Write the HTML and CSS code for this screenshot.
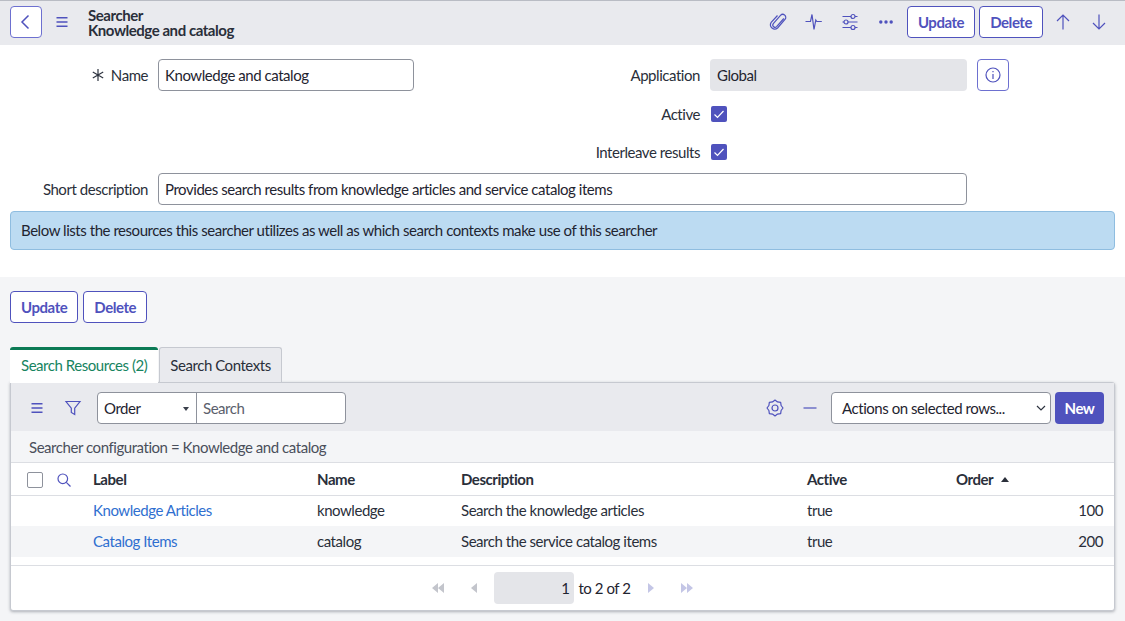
FILE: index.html
```html
<!DOCTYPE html>
<html lang="en">
<head>
    <meta charset="UTF-8">
    <meta name="viewport" content="width=device-width, initial-scale=1.0">
    <title>Searcher - Knowledge and catalog</title>
    <link rel="stylesheet" href="styles.css">
</head>
<body>
    <header class="topbar">
        <button class="btn iconBtn backBtn" aria-label="Back">
            <svg width="20" height="20" viewBox="0 0 20 20"><path d="M12.5 3.5 6 10l6.500 6.500" class="stroke"/></svg>
        </button>
        <svg class="menuIcon" width="20" height="20" viewBox="0 0 20 20"><path d="M4.500 5.800h11M4.500 10h11M4.500 14.200h11" class="stroke"/></svg>
        <div class="recordTitle">
            <div>Searcher</div>
            <div>Knowledge and catalog</div>
        </div>
        <div class="topActions">
            <svg class="topIcon" width="20" height="20" viewBox="0 0 20 20"><path d="M15.800 6.500 8.600 14.600a2.200 2.200 0 0 1-3.300-2.900l7.200-8.300a3 3 0 0 1 4.500 4l-7.400 8.600a4.300 4.300 0 0 1-6.400-5.600L9.500 3.500" class="stroke thin"/></svg>
            <svg class="topIcon" width="20" height="20" viewBox="0 0 20 20"><path d="M1.500 9.500h5l1.500-7 2 15 1.800-9.500 1 1.500h5" class="stroke thin"/></svg>
            <svg class="topIcon" width="20" height="20" viewBox="0 0 20 20"><path d="M2.500 4.500h8.500m4 0h2.500M2.500 10H4m4 0h9.500M2.500 15.500h8.500m4 0h2.500" class="stroke thin"/><circle cx="13" cy="4.500" r="2" class="stroke thin"/><circle cx="6" cy="10" r="2" class="stroke thin"/><circle cx="13" cy="15.500" r="2" class="stroke thin"/></svg>
            <svg class="topIcon lastTopIcon" width="20" height="20" viewBox="0 0 20 20"><circle cx="4.800" cy="10" r="1.700" class="fill"/><circle cx="10" cy="10" r="1.700" class="fill"/><circle cx="15.200" cy="10" r="1.700" class="fill"/></svg>
            <button class="btn">Update</button>
            <button class="btn">Delete</button>
            <svg class="arrowIcon arrowFirst" width="20" height="20" viewBox="0 0 20 20"><path d="M10 17.500V3M4 9l6-6 6 6" class="stroke thin"/></svg>
            <svg class="arrowIcon" width="20" height="20" viewBox="0 0 20 20"><path d="M10 2.500V17M4 11l6 6 6-6" class="stroke thin"/></svg>
        </div>
    </header>

    <section class="formArea">
        <div class="formRow rowName">
            <label class="label labelLeft"><svg class="required" width="14" height="14" viewBox="0 0 14 14"><path d="M7 1v12M1.800 4 12.200 10M12.200 4 1.800 10" class="darkStroke"/></svg>Name</label>
            <input class="field fieldName" type="text" value="Knowledge and catalog">
            <label class="label labelRight">Application</label>
            <div class="field readonly">Global</div>
            <button class="btn iconBtn infoBtn" aria-label="Info">
                <svg width="18" height="18" viewBox="0 0 18 18"><circle cx="9" cy="9" r="7" class="stroke thin"/><path d="M9 8v5M9 5v1.300" class="stroke thin"/></svg>
            </button>
        </div>
        <div class="formRow rowCheck rowActive">
            <label class="label labelFull">Active</label>
            <span class="check"><svg width="16" height="16" viewBox="0 0 16 16"><path d="m3.500 8.500 3 3 6-6.500" class="checkMark"/></svg></span>
        </div>
        <div class="formRow rowCheck rowInterleave">
            <label class="label labelFull">Interleave results</label>
            <span class="check"><svg width="16" height="16" viewBox="0 0 16 16"><path d="m3.500 8.500 3 3 6-6.500" class="checkMark"/></svg></span>
        </div>
        <div class="formRow rowShort">
            <label class="label labelLeft">Short description</label>
            <input class="field fieldShort" type="text" value="Provides search results from knowledge articles and service catalog items">
        </div>
        <div class="notice">Below lists the resources this searcher utilizes as well as which search contexts make use of this searcher</div>
    </section>

    <section class="lowerArea">
        <div class="lowerButtons">
            <button class="btn">Update</button>
            <button class="btn">Delete</button>
        </div>

        <div class="tabs">
            <div class="tab tabActive">Search Resources (2)</div>
            <div class="tab">Search Contexts</div>
        </div>

        <div class="panel">
            <div class="listBar">
                <svg class="listMenu" width="20" height="20" viewBox="0 0 20 20"><path d="M4.500 5.800h11M4.500 10h11M4.500 14.200h11" class="stroke"/></svg>
                <svg class="listFilter" width="20" height="20" viewBox="0 0 20 20"><path d="M3 3.500h14l-5.300 6.700v6.300l-3.400-2v-4.300z" class="stroke thin"/></svg>
                <div class="searchGroup">
                    <div class="orderSelect">Order<span class="smallCaret"></span></div>
                    <div class="searchInput">Search</div>
                </div>
                <svg class="gearIcon" width="20" height="20" viewBox="0 0 20 20"><path d="M18 10 16.100 12.500 15.660 15.660 12.500 16.100 10 18 7.500 16.100 4.340 15.660 3.900 12.500 2 10 3.900 7.500 4.340 4.340 7.500 3.900 10 2 12.500 3.900 15.660 4.340 16.100 7.500z" class="stroke thin gearLine"/><circle cx="10" cy="10" r="3" class="stroke thin"/></svg>
                <svg class="dashIcon" width="20" height="20" viewBox="0 0 20 20"><path d="M3.500 10h13" class="stroke thin"/></svg>
                <div class="actionsSelect">Actions on selected rows...
                    <svg class="chevron" width="12" height="12" viewBox="0 0 12 12"><path d="m2 4 4 4 4-4" class="darkStroke"/></svg>
                </div>
                <button class="newBtn">New</button>
            </div>

            <div class="breadcrumb">Searcher configuration = Knowledge and catalog</div>

            <table class="listTable">
                <colgroup>
                    <col class="colTools">
                    <col class="colLabel">
                    <col class="colName">
                    <col class="colDesc">
                    <col class="colActive">
                    <col class="colOrder">
                </colgroup>
                <thead>
                    <tr>
                        <th class="toolsCell">
                            <span class="rowCheckbox"></span>
                            <svg class="headSearch" width="16" height="16" viewBox="0 0 16 16"><circle cx="6.800" cy="6.800" r="4.800" class="stroke thin"/><path d="m10.300 10.300 4.200 4.200" class="stroke thin"/></svg>
                        </th>
                        <th>Label</th>
                        <th>Name</th>
                        <th>Description</th>
                        <th>Active</th>
                        <th>Order <span class="sortUp"></span></th>
                    </tr>
                </thead>
                <tbody>
                    <tr>
                        <td></td>
                        <td><a href="#">Knowledge Articles</a></td>
                        <td>knowledge</td>
                        <td>Search the knowledge articles</td>
                        <td>true</td>
                        <td class="num">100</td>
                    </tr>
                    <tr class="oddRow">
                        <td></td>
                        <td><a href="#">Catalog Items</a></td>
                        <td>catalog</td>
                        <td>Search the service catalog items</td>
                        <td>true</td>
                        <td class="num">200</td>
                    </tr>
                </tbody>
            </table>

            <div class="pager">
                <svg class="pagerIcon first" width="14" height="12" viewBox="0 0 14 12"><path d="M7 1v10L1 6zM13 1v10L7 6z"/></svg>
                <svg class="pagerIcon prev" width="8" height="12" viewBox="0 0 8 12"><path d="M7 1v10L1 6z"/></svg>
                <div class="pageBox">1</div>
                <span class="pageText">to 2 of 2</span>
                <svg class="pagerIcon next" width="8" height="12" viewBox="0 0 8 12"><path d="M1 1v10l6-5z"/></svg>
                <svg class="pagerIcon last" width="14" height="12" viewBox="0 0 14 12"><path d="M1 1v10l6-5zM7 1v10l6-5z"/></svg>
            </div>
        </div>
    </section>
</body>
</html>
```

FILE: styles.css
```css
* {
    box-sizing: border-box;
}

html, body {
    height: 621px;
    overflow: hidden;
}

body {
    margin: 0;
    font-family: Lato, "Liberation Sans", sans-serif;
    font-size: 15px;
    letter-spacing: -0.45px;
    color: #1f2430;
    background-color: #f4f5f7;
}

.stroke {
    fill: none;
    stroke: #4f52bd;
    stroke-width: 1.500;
}

.thin {
    stroke-width: 1.200;
}

.gearLine {
    stroke-linejoin: round;
}

.fill {
    fill: #4f52bd;
}

.darkStroke {
    fill: none;
    stroke: #2e3440;
    stroke-width: 1.200;
}

.btn {
    height: 32px;
    padding: 0 10px;
    font-family: inherit;
    font-size: 15px;
    font-weight: 700;
    letter-spacing: inherit;
    color: #4f52bd;
    background-color: white;
    border: 1px solid #4f52bd;
    border-radius: 4px;
}

.iconBtn {
    width: 32px;
    padding: 0;
    display: flex;
    align-items: center;
    justify-content: center;
    border-color: #6d70d0;
}

/* top bar */
.topbar {
    height: 45px;
    display: flex;
    align-items: center;
    padding-left: 10px;
    padding-bottom: 2px;
    background-color: #e9eaee;
    border-top: 1px solid #b9bcc4;
}

.menuIcon {
    margin-left: 10px;
}

.recordTitle {
    margin-left: 16px;
    margin-top: 2px;
    font-size: 15px;
    font-weight: 700;
    line-height: 15px;
    color: #2a2f3a;
}

.topActions {
    margin-left: auto;
    display: flex;
    align-items: center;
}

.topIcon {
    margin-right: 16px;
}

.lastTopIcon {
    margin-right: 11px;
}

.topActions .btn + .btn {
    margin-left: 4px;
}

.arrowIcon {
    margin-left: 16px;
    margin-right: 16px;
}

.arrowFirst {
    margin-left: 10px;
    margin-right: 0;
}

/* form */
.formArea {
    height: 232px;
    padding: 14px 10px 0;
    background-color: white;
}

.formRow {
    display: flex;
    align-items: center;
}

.label {
    flex: none;
    display: flex;
    align-items: center;
    justify-content: flex-end;
    color: #2a2f3a;
}

.labelLeft {
    width: 138px;
    margin-right: 10px;
}

.required {
    margin-right: 6px;
}

.labelRight {
    width: 286px;
    margin-right: 10px;
}

.labelFull {
    width: 690px;
    margin-right: 10px;
}

.field {
    height: 32px;
    padding: 0 6px;
    font-family: inherit;
    font-size: 15px;
    letter-spacing: inherit;
    color: #1f2430;
    background-color: white;
    border: 1px solid #8e929c;
    border-radius: 4px;
}

.fieldName {
    width: 256px;
}

.fieldShort {
    width: 809px;
}

.readonly {
    width: 257px;
    display: flex;
    align-items: center;
    background-color: #e4e5e9;
    border: none;
    padding-left: 7px;
}

.infoBtn {
    margin-left: 10px;
}

.rowName {
    height: 32px;
}

.rowActive {
    margin-top: 13px;
    height: 20px;
}

.rowInterleave {
    margin-top: 18px;
    height: 20px;
}

.rowShort {
    margin-top: 11px;
    height: 32px;
}

.check {
    width: 16px;
    height: 16px;
    display: block;
    background-color: #4f52bd;
    border-radius: 2px;
    margin-left: 1px;
}

.check svg {
    display: block;
}

.checkMark {
    fill: none;
    stroke: white;
    stroke-width: 1.200;
}

.notice {
    height: 39px;
    margin-top: 6px;
    padding: 0 10px 1px;
    display: flex;
    align-items: center;
    background-color: #bcdbf2;
    border: 1px solid #8fbde0;
    border-radius: 4px;
    color: #1f2430;
}

/* lower part */
.lowerArea {
    padding: 14px 10px 0;
}

.lowerButtons {
    display: flex;
    gap: 5px;
}

.tabs {
    display: flex;
    gap: 1px;
    margin-top: 24px;
}

.tab {
    height: 35px;
    padding: 0 10px;
    display: flex;
    align-items: center;
    background-color: #e9eaee;
    border: 1px solid #c6c9d0;
    border-bottom: none;
    border-radius: 3px 3px 0 0;
    color: #2a2f3a;
}

.tabActive {
    position: relative;
    z-index: 1;
    height: 36px;
    margin-bottom: -1px;
    padding: 0 11px 3px;
    color: #17845f;
    background-color: white;
    border: none;
    border-top: 3px solid #0b7a55;
}

.panel {
    height: 229px;
    background-color: white;
    border: 1px solid #c6c9d0;
    border-radius: 0 3px 3px 3px;
    box-shadow: 0 1px 3px rgba(40, 45, 60, 0.35);
}

.listBar {
    height: 48px;
    display: flex;
    align-items: center;
    padding: 2px 10px 0 16px;
    background-color: #e9eaee;
}

.listFilter {
    margin-left: 16px;
}

.searchGroup {
    display: flex;
    width: 249px;
    height: 32px;
    margin-left: 14px;
    background-color: white;
    border: 1px solid #8e929c;
    border-radius: 4px;
}

.orderSelect {
    width: 99px;
    padding-left: 6px;
    display: flex;
    align-items: center;
    position: relative;
    border-right: 1px solid #8e929c;
}

.smallCaret {
    position: absolute;
    right: 7px;
    top: 14px;
    border-left: 3px solid transparent;
    border-right: 3px solid transparent;
    border-top: 4px solid #3a3f4b;
}

.searchInput {
    padding-left: 6px;
    display: flex;
    align-items: center;
    color: #5b606c;
}

.gearIcon {
    margin-left: auto;
}

.dashIcon {
    margin-left: 15px;
}

.actionsSelect {
    width: 220px;
    height: 32px;
    margin-left: 11px;
    padding-left: 10px;
    display: flex;
    align-items: center;
    position: relative;
    background-color: white;
    border: 1px solid #8e929c;
    border-radius: 4px;
}

.chevron {
    position: absolute;
    right: 3px;
    top: 9px;
}

.newBtn {
    width: 49px;
    height: 32px;
    margin-left: 4px;
    font-family: inherit;
    font-size: 15px;
    font-weight: 700;
    letter-spacing: inherit;
    color: white;
    background-color: #4f52bd;
    border: none;
    border-radius: 4px;
}

.breadcrumb {
    height: 32px;
    padding-left: 18px;
    display: flex;
    align-items: center;
    background-color: #f4f5f7;
    color: #4a4f5b;
    border-bottom: 1px solid #dcdee3;
}

/* list table */
.listTable {
    width: 100%;
    table-layout: fixed;
    border-collapse: collapse;
}

.colTools { width: 82px; }
.colLabel { width: 224px; }
.colName { width: 144px; }
.colDesc { width: 346px; }
.colActive { width: 149px; }

.listTable th {
    height: 32px;
    padding: 0;
    text-align: left;
    font-weight: 700;
    color: #2a2f3a;
    border-bottom: 1px solid #dcdee3;
}

.listTable td {
    height: 31px;
    padding: 0 0 2px;
    color: #2a2f3a;
}

.listTable a {
    color: #2f6fd0;
    text-decoration: none;
}

.oddRow td {
    background-color: #f4f5f7;
}

.listTable .num {
    padding-right: 11px;
    text-align: right;
}

.listTable .toolsCell {
    padding-left: 16px;
}

.rowCheckbox {
    display: inline-block;
    width: 16px;
    height: 16px;
    vertical-align: middle;
    background-color: white;
    border: 1px solid #8e929c;
    border-radius: 2px;
}

.headSearch {
    margin-left: 10px;
    vertical-align: middle;
}

.sortUp {
    display: inline-block;
    margin-left: 5px;
    vertical-align: 3px;
    border-left: 4px solid transparent;
    border-right: 4px solid transparent;
    border-bottom: 5px solid #2a2f3a;
}

/* pager */
.pager {
    height: 45px;
    margin-top: 8px;
    padding-bottom: 1px;
    display: flex;
    align-items: center;
    justify-content: center;
    border-top: 1px solid #dcdee3;
}

.pagerIcon {
    fill: #c4c6e6;
}

.first {
    fill: #c3c5cc;
}

.prev {
    fill: #c3c5cc;
    margin-left: 25px;
}

.pageBox {
    width: 80px;
    height: 32px;
    margin-left: 16px;
    padding-right: 5px;
    display: flex;
    align-items: center;
    justify-content: flex-end;
    background-color: #e4e5e9;
    border-radius: 4px;
}

.pageText {
    margin-left: 4px;
}

.next {
    margin-left: 16px;
}

.last {
    margin-left: 25px;
}
```
